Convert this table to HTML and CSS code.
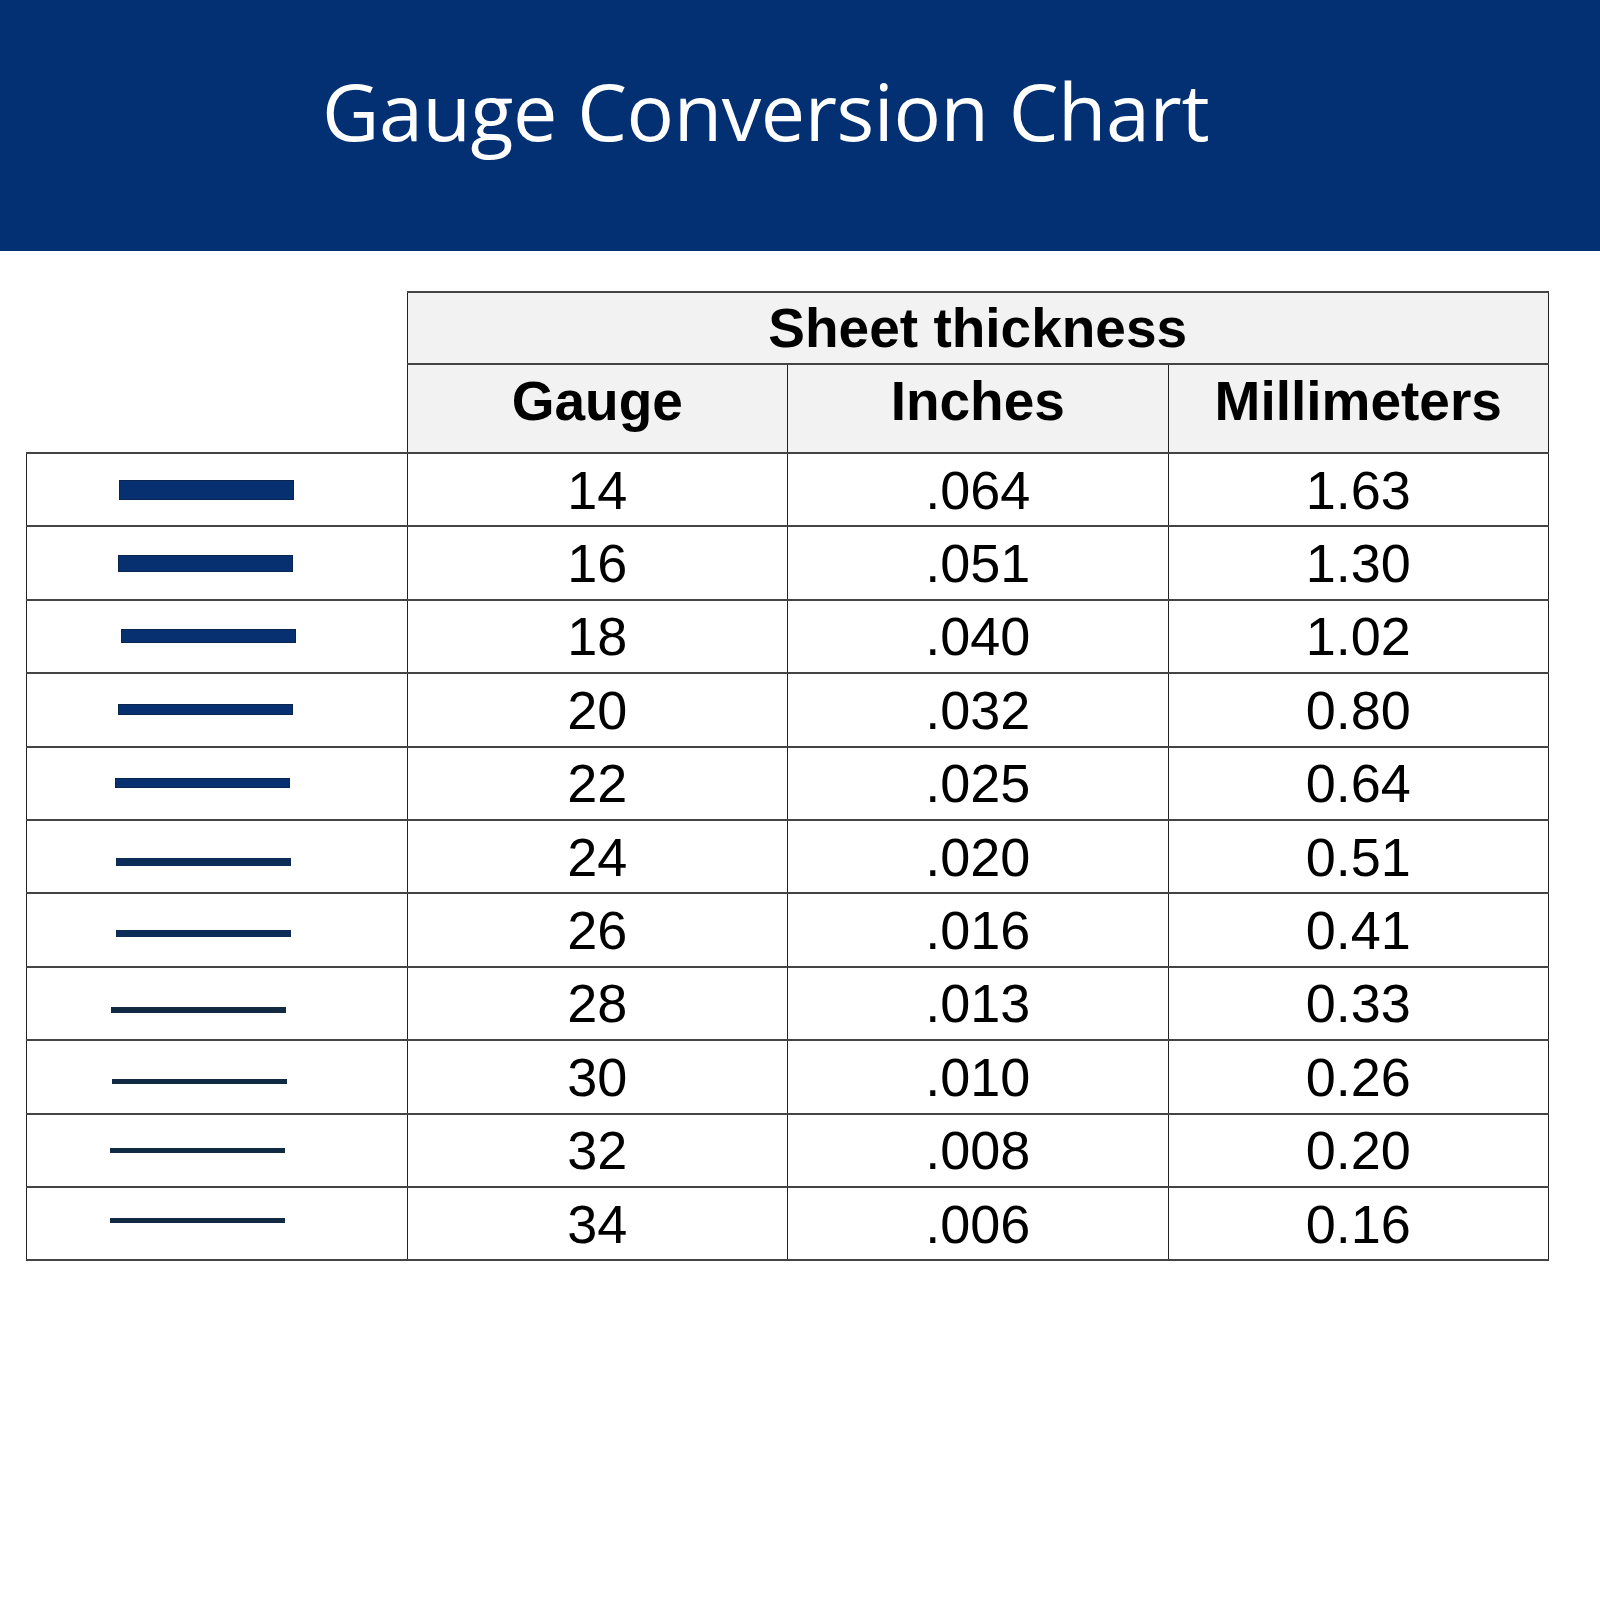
FILE: index.html
```html
<!DOCTYPE html>
<html lang="en">
<head>
<meta charset="utf-8">
<title>Gauge Conversion Chart</title>
<link rel="stylesheet" href="styles.css">
</head>
<body>
<header class="banner">
  <h1 class="title">Gauge Conversion Chart</h1>
</header>
<main class="content">
  <table class="chart">
    <colgroup><col><col><col><col></colgroup>
    <thead>
      <tr class="group-row">
        <th class="blank"></th>
        <th class="group" colspan="3">Sheet thickness</th>
      </tr>
      <tr class="head-row">
        <th class="blank"></th>
        <th class="col-head">Gauge</th>
        <th class="col-head">Inches</th>
        <th class="col-head">Millimeters</th>
      </tr>
    </thead>
    <tbody>
      <tr><td class="sample"><div class="bar thick" style="height:20px;margin-left:92px"></div></td><td>14</td><td>.064</td><td>1.63</td></tr>
      <tr><td class="sample"><div class="bar thick" style="height:17px;margin-left:91px"></div></td><td>16</td><td>.051</td><td>1.30</td></tr>
      <tr><td class="sample"><div class="bar thick" style="height:14px;margin-left:94px"></div></td><td>18</td><td>.040</td><td>1.02</td></tr>
      <tr><td class="sample"><div class="bar thick" style="height:11px;margin-left:91px"></div></td><td>20</td><td>.032</td><td>0.80</td></tr>
      <tr><td class="sample"><div class="bar thick" style="height:10px;margin-left:88px"></div></td><td>22</td><td>.025</td><td>0.64</td></tr>
      <tr><td class="sample"><div class="bar mid" style="height:8px;margin-left:89px;transform:translateY(5px)"></div></td><td>24</td><td>.020</td><td>0.51</td></tr>
      <tr><td class="sample"><div class="bar mid" style="height:7px;margin-left:89px;transform:translateY(3px)"></div></td><td>26</td><td>.016</td><td>0.41</td></tr>
      <tr><td class="sample"><div class="bar thin" style="height:6px;margin-left:84px;transform:translateY(7px)"></div></td><td>28</td><td>.013</td><td>0.33</td></tr>
      <tr><td class="sample"><div class="bar thin" style="height:5px;margin-left:85px;transform:translateY(5px)"></div></td><td>30</td><td>.010</td><td>0.26</td></tr>
      <tr><td class="sample"><div class="bar thin" style="height:5px;margin-left:83px"></div></td><td>32</td><td>.008</td><td>0.20</td></tr>
      <tr><td class="sample"><div class="bar thin" style="height:5px;margin-left:83px;transform:translateY(-3px)"></div></td><td>34</td><td>.006</td><td>0.16</td></tr>
    </tbody>
  </table>
</main>
</body>
</html>
```

FILE: styles.css
```css
html, body {
  margin: 0;
  padding: 0;
  background: #ffffff;
}

body {
  font-family: "Liberation Sans", Arial, sans-serif;
  color: #000000;
}

.banner {
  height: 251px;
  background: #032f73;
  display: flex;
  align-items: flex-start;
  padding-left: 322px;
  box-sizing: border-box;
}

.title {
  margin: 0;
  padding-top: 56px;
  font-family: "Open Sans", "Noto Sans", sans-serif;
  font-weight: 400;
  font-size: 79px;
  line-height: 110px;
  color: #ffffff;
  letter-spacing: -0.4px;
  white-space: nowrap;
}

.content {
  padding: 40px 0 0 26px;
}

.chart {
  border-collapse: collapse;
  table-layout: fixed;
  width: 1523px;
}

.chart col {
  width: 25%;
}

.chart th,
.chart td {
  padding: 0;
  text-align: center;
  vertical-align: middle;
}

.chart th.blank {
  border: none;
  background: transparent;
}

.group-row {
  height: 72px;
}

.head-row {
  height: 89px;
}

.chart .group,
.chart .col-head {
  background: #f2f2f2;
  font-weight: 700;
  font-size: 55px;
  border: 1px solid #222222;
  border-top-width: 2px;
  border-bottom-width: 2px;
  border-top-color: #444444;
  border-bottom-color: #444444;
}

.chart .group {
  line-height: 60px;
}

.chart .col-head {
  line-height: 56px;
  padding-bottom: 16px;
}

.chart tbody tr {
  height: 73.4px;
}

.chart td {
  font-size: 54px;
  line-height: 60px;
  border: 1px solid #222222;
  border-top-width: 2px;
  border-bottom-width: 2px;
  border-top-color: #444444;
  border-bottom-color: #444444;
}

.chart td.sample {
  text-align: left;
}

.bar {
  width: 175px;
  box-sizing: border-box;
}

.bar.thick {
  background: #063070;
  border: 1px solid #0a2550;
}

.bar.mid {
  background: #0b2d58;
}

.bar.thin {
  background: #0f2a42;
}
```
